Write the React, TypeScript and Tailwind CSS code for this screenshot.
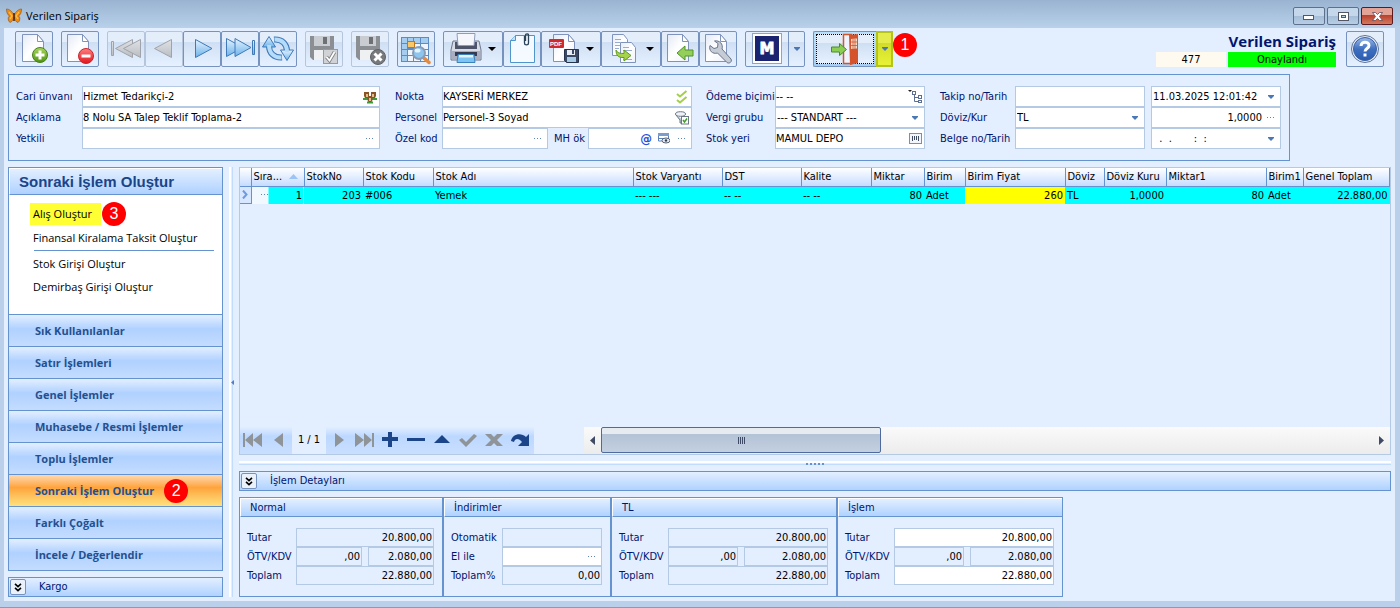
import React, { useId } from 'react';
import { clsx } from 'clsx';

/* ---------- Small shared glyphs ---------- */

const Dots = () => (
    <svg viewBox="0 0 8 2" className="w-2 h-[2px]" fill="#5f84b8" shapeRendering="crispEdges">
        <rect x="0" y="0" width="1" height="1" />
        <rect x="3" y="0" width="1" height="1" />
        <rect x="6" y="0" width="1" height="1" />
    </svg>
);

const CaretSmall = () => (
    <svg viewBox="0 0 6 4" className="w-[6px] h-1" fill="#4a78b5">
        <path d="M0 0h6v1L3 4 0 1z" />
    </svg>
);

const CaretBlack = () => (
    <svg viewBox="0 0 8 4" className="w-2 h-1" fill="#000">
        <path d="M0 0h8L4 4z" />
    </svg>
);

const Expand = () => (
    <svg viewBox="0 0 8 9" className="w-2 h-[9px]" fill="none" stroke="#000" strokeWidth="1.6">
        <path d="M1 .8l3 2.8 3-2.8M1 4.8l3 2.8 3-2.8" />
    </svg>
);

/* ---------- Toolbar icons, 32x32 ---------- */

const Svg = ({ children }: { children: React.ReactNode }) => (
    <svg viewBox="0 0 32 32" className="w-8 h-8 shrink-0">
        {children}
    </svg>
);

const Defs = () => (
    <svg className="absolute w-0 h-0" aria-hidden="true">
        <defs>
            <linearGradient id="gPage" x1="0" y1="0" x2="1" y2="1">
                <stop offset="0" stopColor="#e4eaf5" />
                <stop offset=".5" stopColor="#fff" />
                <stop offset="1" stopColor="#edf1fa" />
            </linearGradient>
            <linearGradient id="gGreen" x1="0" y1="0" x2="0" y2="1">
                <stop offset="0" stopColor="#a9d65c" />
                <stop offset="1" stopColor="#4f9310" />
            </linearGradient>
            <linearGradient id="gRed" x1="0" y1="0" x2="0" y2="1">
                <stop offset="0" stopColor="#ff7f7f" />
                <stop offset="1" stopColor="#e3131b" />
            </linearGradient>
            <linearGradient id="gBlue" x1="0" y1="0" x2="0" y2="1">
                <stop offset="0" stopColor="#e4f3ff" />
                <stop offset="1" stopColor="#6bb2ea" />
            </linearGradient>
            <linearGradient id="gGray" x1="0" y1="0" x2="0" y2="1">
                <stop offset="0" stopColor="#e0e2e5" />
                <stop offset="1" stopColor="#b9bdc2" />
            </linearGradient>
            <linearGradient id="gHelp" x1="0" y1="0" x2="0" y2="1">
                <stop offset="0" stopColor="#9cbbe8" />
                <stop offset=".5" stopColor="#3f6fc0" />
                <stop offset="1" stopColor="#2c5cae" />
            </linearGradient>
        </defs>
    </svg>
);

const Page = ({ x = 4 }: { x?: number }) => (
    <g transform={`translate(${x} 1)`}>
        <path d="M.5 .5h15l6 7v20H.5z" fill="url(#gPage)" stroke="#7f93bd" />
        <path d="M15.5 .5v7h6z" fill="#fff" stroke="#7f93bd" strokeLinejoin="round" />
    </g>
);

const NewIcon = () => (
    <Svg>
        <Page />
        <circle cx="22" cy="22" r="7.5" fill="url(#gGreen)" stroke="#47801a" />
        <path d="M20.5 17.5h3v3h3v3h-3v3h-3v-3h-3v-3h3z" fill="#fff" />
    </Svg>
);

const DeleteIcon = () => (
    <Svg>
        <Page x={3} />
        <circle cx="22" cy="23" r="7.5" fill="url(#gRed)" stroke="#c8252c" />
        <rect x="17.5" y="21.5" width="9" height="3" fill="#fff" />
    </Svg>
);

const FirstIcon = () => (
    <Svg>
        <g fill="url(#gGray)" stroke="#a0a4aa" strokeLinejoin="round">
            <rect x="1.5" y="8.5" width="2" height="14" />
            <path d="M22.5 6.5v18L5.5 15.5z" />
            <path d="M30.5 6.5v18L13.5 15.5z" />
        </g>
    </Svg>
);

const PrevIcon = () => (
    <Svg>
        <path d="M23.5 6.5v18L6.5 15.5z" fill="url(#gGray)" stroke="#a0a4aa" strokeLinejoin="round" />
    </Svg>
);

const NextIcon = () => (
    <Svg>
        <path d="M9.5 6.5v18L26 15.5z" fill="url(#gBlue)" stroke="#3f79b8" strokeLinejoin="round" />
    </Svg>
);

const LastIcon = () => (
    <Svg>
        <g fill="url(#gBlue)" stroke="#3f79b8" strokeLinejoin="round">
            <path d="M2.5 5.5v18L19 14.500z" />
            <path d="M11 5.5v18L27 14.500z" />
            <rect x="28.5" y="7.5" width="2" height="14" />
        </g>
    </Svg>
);

const RefreshIcon = () => (
    <Svg>
        <g fill="none" stroke="#3f79b8" strokeWidth="6">
            <path d="M7 13c0 7 5 12 13 11.500" />
            <path d="M25 18c0-7-5-12-13-11.500" />
        </g>
        <g fill="url(#gBlue)" stroke="#3f79b8" strokeLinejoin="round">
            <path d="M.5 14L7 3.500 13.500 14z" />
            <path d="M18.500 17h13L25 27.500z" />
        </g>
        <g fill="none" stroke="#b5dcf8" strokeWidth="4">
            <path d="M7 12c0 8 5 13 12.500 12.500" />
            <path d="M25 19c0-8-5-13-12.500-12.500" />
        </g>
    </Svg>
);

const FloppyGray = () => (
    <>
        <path d="M2 3h24v24H5l-3-3z" fill="#8b8e92" />
        <rect x="6" y="3" width="16" height="10" fill="#c9ccd0" />
        <rect x="15" y="4" width="4" height="7" fill="#6d7074" />
        <rect x="6" y="17" width="16" height="10" fill="#eef0f2" />
    </>
);

const SaveIcon = () => (
    <Svg>
        <FloppyGray />
        <rect x="15.5" y="16.5" width="14" height="14" fill="#d0d2d5" stroke="#97999c" />
        <path d="M18.500 24l3 3.500 5-8.500" fill="none" stroke="#7f8284" strokeWidth="3.500" />
        <path d="M18.500 24l3 3.500 5-8.500" fill="none" stroke="#fff" strokeWidth="1.800" />
    </Svg>
);

const SaveCloseIcon = () => (
    <Svg>
        <FloppyGray />
        <circle cx="24" cy="24" r="7.5" fill="#77797c" stroke="#606266" />
        <path d="M20.5 20.5l7 7M27.5 20.5l-7 7" stroke="#fff" strokeWidth="3" />
    </Svg>
);

const SearchGridIcon = () => (
    <Svg>
        <rect x="1" y="4" width="28" height="25" fill="#5b8cc4" />
        <path d="M2 5h5v5H2zM8 5h5v5H8zM14 5h6v5h-6zM21 5h7v5h-7zM2 11h5v5H2zM2 17h5v5H2zM2 23h5v5H2z" fill="#a5cdf0" />
        <path d="M14 11h6v5h-6zM21 11h7v5h-7zM8 17h5v5H8zM14 17h6v5h-6zM21 17h7v5h-7zM8 23h5v5H8zM14 23h6v5h-6zM21 23h7v5h-7z" fill="#eef5fd" />
        <rect x="7.5" y="8.5" width="7" height="6" fill="#f8c868" stroke="#c0761a" />
        <path d="M24 25l5 4.500" stroke="#e58b3d" strokeWidth="3.500" strokeLinecap="round" />
        <circle cx="19" cy="20" r="6" fill="#8cc6f0" stroke="#8a9cb4" strokeWidth="2" />
        <ellipse cx="17.500" cy="17.500" rx="3" ry="2" fill="#e4f4ff" />
    </Svg>
);

const PrinterIcon = () => (
    <Svg>
        <path d="M3 8h26l2 9v10H1V17z" fill="#d7dbe6" stroke="#6d7690" />
        <path d="M5 9h22v7H5z" fill="#4d5368" />
        <path d="M7 .5h18l-1 12H8z" fill="#f4f6fb" stroke="#8f9cb8" />
        <path d="M2 18h28v8H2z" fill="#a9afc0" />
        <path d="M5 19h22v4H5z" fill="#353b50" />
        <path d="M8 21.500h16l1 8H7z" fill="#7cc4f3" stroke="#3d81bd" />
        <path d="M9 22h14v2.500H9z" fill="#e2f3fd" />
    </Svg>
);

const ClipIcon = () => (
    <Svg>
        <path d="M4.5 7.5l5-5h19v27h-24z" fill="#f4faff" stroke="#4f95cc" />
        <path d="M4.5 7.5h5v-5" fill="#bfe1f7" stroke="#4f95cc" />
        <path d="M18.500 3v7c0 2.500 4 2.500 4 0V2c0-1.500-3-1.500-3 0v6" fill="none" stroke="#2c4358" strokeWidth="1.300" />
    </Svg>
);

const PdfIcon = () => (
    <Svg>
        <Page x={5} />
        <rect x="1" y="6" width="15" height="9" rx="1" fill="#d02a2a" />
        <text x="2" y="13" fontSize="6" fontWeight="700" fill="#fff" fontFamily="Liberation Sans, sans-serif">PDF</text>
        <path d="M16.5 16.5h14v13h-12l-2-2z" fill="#3a4a66" stroke="#26334b" />
        <rect x="19" y="17" width="8" height="5" fill="#e8edf6" />
        <rect x="24" y="17" width="2" height="4" fill="#3a4a66" />
        <rect x="19" y="24" width="9" height="5" fill="#a8cbe8" />
    </Svg>
);

const CopyIcon = () => (
    <Svg>
        <path d="M4.5 1.5h11l4 5v16h-15z" fill="url(#gPage)" stroke="#7f93bd" />
        <path d="M7 6.500h6M7 9.500h5M7 12.500h5M7 15.500h4" stroke="#98abd0" />
        <path d="M12.5 9.5h11l4 5v15h-15z" fill="url(#gPage)" stroke="#7f93bd" />
        <path d="M15 14.500h6M15 17.500h9M15 26.500h9" stroke="#98abd0" />
        <path d="M8 17c1 3 4 3.500 8 3.500V17l7 5.500-7 5.500v-3.500C10 25 8 22 8 17z" fill="#a5d34c" stroke="#5f9a21" />
    </Svg>
);

const ImportIcon = () => (
    <Svg>
        <Page x={3} />
        <path d="M13 20l8-7v4h8v6h-8v4z" fill="#94cf5c" stroke="#4e9527" strokeLinejoin="round" />
    </Svg>
);

const WrenchIcon = () => (
    <Svg>
        <Page x={3} />
        <path d="M8 12.5l4 3 3.500-1 .5-4-3.500-2.500c5-1 9 3 7.500 8l9 10c1.500 3-2 5-4 3.500l-9.500-9.500c-5 1.500-9-2.500-7.500-7.500z" fill="#c6ccd6" stroke="#68748a" strokeLinejoin="round" />
    </Svg>
);

const LogoIcon = () => (
    <Svg>
        <rect x="1.5" y=".5" width="29" height="30" fill="#fff" stroke="#8ea3c6" />
        <rect x="4" y="3" width="24" height="25" fill="#1a2370" />
        <text x="16" y="21" textAnchor="middle" fontSize="15" fontWeight="700" fill="#fff" stroke="#fff" strokeWidth=".8" fontFamily="DejaVu Sans, sans-serif">M</text>
    </Svg>
);

const DoorIcon = () => (
    <svg viewBox="0 0 32 32" className="w-8 h-8">
        <path d="M14.5 1.5h8v29h-8z" fill="#eef4ff" stroke="#d2552b" strokeWidth="1.500" />
        <path d="M20 2l9-1v29l-8 2z" fill="#d4532c" />
        <path d="M22 6l6-.5v10l-6 .5z" fill="#f0dccb" />
        <path d="M24 6v10M26 6v10M22 9h6M22 12.500h6" stroke="#d4532c" strokeWidth=".8" />
        <path d="M2.500 14h8v-3.500l7 6-7 6V19h-8z" fill="#8ccd54" stroke="#4a8c2a" strokeLinejoin="round" />
    </svg>
);

const HelpIcon = () => (
    <Svg>
        <circle cx="16" cy="16" r="13.500" fill="#e8eef8" stroke="#5e7397" />
        <circle cx="16" cy="16" r="11.500" fill="url(#gHelp)" stroke="#3a60a6" />
        <path d="M12 13c0-5 8-5 8-.5 0 3-4 3-4 6" fill="none" stroke="#fff" strokeWidth="3" />
        <rect x="14.5" y="20.5" width="3" height="3" fill="#fff" />
    </Svg>
);

const Butterfly = () => (
    <svg viewBox="0 0 16 16" className="w-4 h-4">
        <path d="M8 7C6 3 3 1 .5 1c0 3 1 6 3 7-2 1-1.500 5 .5 6.500 2-.5 3.500-3 4-5.500.5 2.500 2 5 4 5.500 2-1.500 2.500-5.500.5-6.500 2-1 3-4 3-7C13 1 10 3 8 7z" fill="#f08c14" stroke="#8a4c10" strokeWidth=".6" />
        <path d="M3 4l3 4-2 3M13 4l-3 4 2 3" fill="none" stroke="#ffc04a" strokeWidth="1.200" />
        <path d="M8 5v8" stroke="#3f240c" strokeWidth="1.500" />
    </svg>
);

/* ---------- Field icons ---------- */

const PeopleIcon = () => (
    <svg viewBox="0 0 14 14" className="w-[14px] h-[14px]">
        <path d="M0 8h6v2H0zM8 8h6v2H8zM4 11.500h6v2H4z" fill="#3f9a3a" />
        <path d="M1 2h5v4l-1 2H2L1 6zM8 2h5v4l-1 2H9L8 6zM4.500 6h5v4l-1 2h-3l-1-2z" fill="#8a5526" />
        <path d="M3 4h2v3H3zM9 4h2v3H9zM6 8h2v3H6z" fill="#e6bd8d" />
    </svg>
);

const ChecksIcon = () => (
    <svg viewBox="0 0 12 14" className="w-3 h-[14px]" fill="none" stroke="#a4cf4b" strokeWidth="2">
        <path d="M1 4l3 2.500L10.500 1M1 10l3 2.500L10.500 7" />
    </svg>
);

const FunnelIcon = () => (
    <svg viewBox="0 0 14 14" className="w-[14px] h-[14px]">
        <ellipse cx="5.500" cy="3" rx="5" ry="2.300" fill="#eef1f6" stroke="#6c7789" />
        <path d="M1 4l4 5v3h2V8" fill="#c3cad6" stroke="#6c7789" />
        <rect x="6.5" y="5.5" width="7" height="7.500" fill="#fff" stroke="#6c7789" />
        <path d="M8 9l1.500 2L12 7.500" fill="none" stroke="#3e9d2c" strokeWidth="1.500" />
    </svg>
);

const TreeIcon = () => (
    <svg viewBox="0 0 14 14" className="w-[14px] h-[14px]" fill="none" stroke="#5c6f92">
        <path d="M0 0h4L2 2z" fill="#222" stroke="none" />
        <rect x="4.5" y="1.5" width="3" height="3" />
        <rect x="10.5" y="5.5" width="3" height="3" />
        <rect x="10.5" y="10.5" width="3" height="2" />
        <path d="M6.500 5v6.500h4M6.500 7.500h4" />
    </svg>
);

const DepotIcon = () => (
    <svg viewBox="0 0 13 11" className="w-[13px] h-[11px]" fill="none" stroke="#7d8ea8">
        <rect x=".5" y=".5" width="12" height="10" fill="#f3f6fb" />
        <path d="M3.500 3v5M5.500 3v4M7.500 3v4M9.500 3v5" stroke="#3d4a60" />
    </svg>
);

const FormEyeIcon = () => (
    <svg viewBox="0 0 12 11" className="w-3 h-[11px]">
        <path d="M.5 .5h10v5h-10z" fill="#fff" stroke="#5b80b8" />
        <path d="M0 0h11v3H0z" fill="#7d9ccc" />
        <path d="M.5 5v3H4" fill="none" stroke="#5b80b8" />
        <ellipse cx="8" cy="7.500" rx="4" ry="2.500" fill="#e4e9f2" stroke="#5a6577" />
        <circle cx="8" cy="7.500" r="1.200" fill="#333c4b" />
    </svg>
);

/* ---------- Building blocks ---------- */

const Badge = ({ n, className }: { n: number; className?: string }) => (
    <span className={clsx("flex items-center justify-center w-6 h-6 shrink-0 rounded-full bg-[#fe0000] text-white text-[16px] leading-none font-normal font-['Liberation_Sans',sans-serif]", className)}>
        {n}
    </span>
);

type ToolProps = {
    label: string;
    icon: React.ReactNode;
    caret?: boolean;
    disabled?: boolean;
};

const Tool = ({ label, icon, caret, disabled }: ToolProps) => (
    <button
        type="button"
        aria-label={label}
        disabled={disabled}
        className={clsx(
            'flex items-center h-9 rounded-[2px] border bg-linear-to-b from-[#e4eefb] from-30% via-[#cfdff3] via-30% to-[#e6f1ff]',
            caret ? 'w-[60px] pl-[6px] gap-[6px]' : 'w-[38px] justify-center',
            disabled ? 'border-[#b5c5dc]' : 'border-[#7693bf]'
        )}
    >
        {icon}
        {caret && <CaretBlack />}
    </button>
);

type FieldProps = {
    label: string;
    value?: string;
    options?: boolean;
    hideLabel?: boolean;
    right?: boolean;
    labelClass?: string;
    boxClass: string;
    extras?: React.ReactNode;
};

const Field = ({ label, value = '', options, hideLabel, right, labelClass, boxClass, extras }: FieldProps) => {
    const id = useId();
    return (
        <div className="flex items-center">
            {!hideLabel && (
                <label htmlFor={id} className={clsx('text-[#00156e] whitespace-nowrap', labelClass)}>
                    {label}
                </label>
            )}
            <div className={clsx('flex items-center h-[21px] bg-white border border-[#b4c9e3]', boxClass)}>
                {options ? (
                    <select id={id} defaultValue={value} className="flex-1 min-w-0 h-full appearance-none bg-transparent outline-none pl-px">
                        <option>{value}</option>
                    </select>
                ) : (
                    <input
                        id={id}
                        type="text"
                        aria-label={hideLabel ? label : undefined}
                        defaultValue={value}
                        className={clsx('flex-1 min-w-0 h-full bg-transparent outline-none whitespace-pre', right && 'text-right')}
                    />
                )}
                {extras}
            </div>
        </div>
    );
};

const Extra = ({ label, children }: { label: string; children: React.ReactNode }) => (
    <button type="button" aria-label={label} className="flex items-center justify-center w-[18px] h-full shrink-0">
        {children}
    </button>
);

type AmountProps = {
    label: string;
    value?: string;
    white?: boolean;
    className: string;
    labelClass?: string;
    hideLabel?: boolean;
    dots?: boolean;
};

const Amount = ({ label, value, white, className, labelClass = 'w-[49px]', hideLabel, dots }: AmountProps) => {
    const id = useId();
    return (
        <div className={clsx('flex items-center min-w-0', className)}>
            {!hideLabel && (
                <label htmlFor={id} className={clsx('shrink-0 whitespace-nowrap text-[#00156e]', labelClass)}>
                    {label}
                </label>
            )}
            <div className={clsx('flex items-center flex-1 min-w-0 h-[19px] border border-[#b4c9e3]', white ? 'bg-white' : 'bg-[#e3eeff]')}>
                <input
                    id={id}
                    type="text"
                    aria-label={hideLabel ? label : undefined}
                    defaultValue={value}
                    className="flex-1 w-full min-w-0 h-full bg-transparent outline-none text-right pr-px"
                />
                {dots && <Extra label={`${label} seç`}><Dots /></Extra>}
            </div>
        </div>
    );
};

const TotalsBox = ({ title, className, children }: { title: string; className: string; children: React.ReactNode }) => (
    <section className={clsx('h-[100px] border border-[#6593cf] bg-[#e3eeff]', className)}>
        <h3 className="h-[19px] leading-[17px] pl-[9px] text-[#00156e] border-t border-l border-white border-b border-b-[#6593cf] bg-linear-to-b from-[#e3efff] to-[#afd2ff]">
            {title}
        </h3>
        <div className="pt-[11px] pr-2 pl-[7px]">{children}</div>
    </section>
);

const Totals = ({ title, className, taxClass, white }: { title: string; className: string; taxClass: string; white?: boolean }) => (
    <TotalsBox title={title} className={className}>
        <Amount label="Tutar" value="20.800,00" white={white} className="w-full" />
        <div className="flex gap-[6px]">
            <Amount label="ÖTV/KDV" value=",00" className={clsx('shrink-0', taxClass)} />
            <Amount label="KDV" hideLabel value="2.080,00" className="flex-1" />
        </div>
        <Amount label="Toplam" value="22.880,00" white={white} className="w-full" />
    </TotalsBox>
);

/* ---------- Data ---------- */

const sections = [
    'Sık Kullanılanlar',
    'Satır İşlemleri',
    'Genel İşlemler',
    'Muhasebe / Resmi İşlemler',
    'Toplu İşlemler',
    'Sonraki İşlem Oluştur',
    'Farklı Çoğalt',
    'İncele / Değerlendir',
];

const columns = [
    { title: 'Sıra...', value: '1', w: 'w-[53px]', right: true, sorted: true },
    { title: 'StokNo', value: '203', w: 'w-[59px]', right: true },
    { title: 'Stok Kodu', value: '#006', w: 'w-[70px]' },
    { title: 'Stok Adı', value: 'Yemek', w: 'w-[200px]' },
    { title: 'Stok Varyantı', value: '--- ---', w: 'w-[89px]' },
    { title: 'DST', value: '-- --', w: 'w-[79px]' },
    { title: 'Kalite', value: '-- --', w: 'w-[70px]' },
    { title: 'Miktar', value: '80', w: 'w-[53px]', right: true },
    { title: 'Birim', value: 'Adet', w: 'w-[41px]' },
    { title: 'Birim Fiyat', value: '260', w: 'w-[100px]', right: true, marked: true },
    { title: 'Döviz', value: 'TL', w: 'w-[39px]' },
    { title: 'Döviz Kuru', value: '1,0000', w: 'w-[62px]', right: true },
    { title: 'Miktar1', value: '80', w: 'w-[100px]', right: true },
    { title: 'Birim1', value: 'Adet', w: 'w-[37px]' },
    { title: 'Genel Toplam', value: '22.880,00', w: '', right: true },
];

const gray = '#8f9499';
const navy = '#1b4489';

const navLeft = [
    { label: 'İlk kayıt', fill: gray, d: 'M0 1h2v14H0zM10 1v14L2 8zM19 1v14l-9-7z' },
    { label: 'Önceki kayıt', fill: gray, d: 'M14 1v14L5 8z' },
];

const navRight = [
    { label: 'Sonraki kayıt', fill: gray, d: 'M6 1v14l9-7z' },
    { label: 'Son kayıt', fill: gray, d: 'M0 1v14l9-7zM9 1v14l8-7zM17 1h2v14h-2z' },
    { label: 'Ekle', fill: navy, d: 'M7 0h4v5h6v4h-6v6H7V9H1V5h6z' },
    { label: 'Sil', fill: navy, d: 'M0 6h18v3H0z' },
    { label: 'Düzenle', fill: navy, d: 'M9 3l8 8H1z' },
    { label: 'Onayla', fill: gray, d: 'M0 8l3-2 4 4 8-8 3 2L7 15z' },
    { label: 'İptal', fill: gray, d: 'M0 2h6l3 3 3-3h6l-6 6 6 6h-6l-3-3-3 3H0l6-6z' },
    { label: 'Yenile', fill: navy, d: 'M0 9C1 2 10 0 15 5l3-3v12H7l4-4C8 6 4 6 3 10z' },
];

const NavButton = ({ item }: { item: { label: string; fill: string; d: string } }) => (
    <button type="button" aria-label={item.label} className="flex items-center justify-center w-[26px] h-full pb-[2px]">
        <svg viewBox="0 0 20 16" className="w-5 h-4" fill={item.fill}>
            <path d={item.d} />
        </svg>
    </button>
);

const strip = 'flex h-[27px] bg-linear-to-b from-[#e3eeff] from-0% via-[#bcd8ff] via-35% to-[#c9dfff]';

/* ---------- Sections of the window ---------- */

const TitleBar = () => (
    <header className="flex items-center h-7 pt-1 pl-[6px] pr-[7px] gap-1 bg-linear-to-b from-[#99b3d1] to-[#b9d1ea]">
        <Butterfly />
        <h1 className="flex-1 text-[11px] leading-4 text-black font-['Open_Sans',sans-serif]">Verilen Sipariş</h1>
        <div className="flex gap-[2px]">
            <button type="button" aria-label="Simge durumuna küçült" className="flex items-center justify-center w-8 h-[18px] rounded-[2px] border border-[#5d718c] bg-linear-to-b from-[#c5d7ea] from-50% via-[#a5bdd7] via-50% to-[#b8cee6]">
                <svg viewBox="0 0 12 6" className="w-3 h-[6px] mt-1"><rect x=".5" y=".5" width="10" height="4" fill="#fff" stroke="#535666" /></svg>
            </button>
            <button type="button" aria-label="Ekranı kapla" className="flex items-center justify-center w-8 h-[18px] rounded-[2px] border border-[#5d718c] bg-linear-to-b from-[#c5d7ea] from-50% via-[#a5bdd7] via-50% to-[#b8cee6]">
                <svg viewBox="0 0 11 9" className="w-[11px] h-[9px]"><rect x=".5" y=".5" width="10" height="8" fill="#fff" stroke="#535666" /><rect x="3.5" y="3.5" width="4" height="2" fill="#b9cde4" stroke="#535666" /></svg>
            </button>
            <button type="button" aria-label="Kapat" className="flex items-center justify-center w-8 h-[18px] rounded-[2px] border border-[#5b1a20] bg-linear-to-b from-[#e3a397] from-45% via-[#b93f2b] via-45% to-[#d3785e]">
                <svg viewBox="0 0 11 9" className="w-[11px] h-[9px]"><path d="M.5 .5h3l2 2 2-2h3L7.500 4.500l3 4h-3l-2-2-2 2h-3l3-4z" fill="#fff" stroke="#5a4a55" strokeWidth=".8" /></svg>
            </button>
        </div>
    </header>
);

const Toolbar = () => (
    <div className="flex items-start pt-[3px] pl-[11px] pr-[11px] h-[46px]">
        <div className="flex gap-2">
            <Tool label="Yeni" icon={<NewIcon />} />
            <Tool label="Sil" icon={<DeleteIcon />} />
            <div className="flex">
                <Tool label="İlk" icon={<FirstIcon />} disabled />
                <Tool label="Önceki" icon={<PrevIcon />} disabled />
                <Tool label="Sonraki" icon={<NextIcon />} />
                <Tool label="Son" icon={<LastIcon />} />
                <Tool label="Yenile" icon={<RefreshIcon />} />
            </div>
            <Tool label="Kaydet" icon={<SaveIcon />} disabled />
            <Tool label="Kaydet ve kapat" icon={<SaveCloseIcon />} disabled />
            <Tool label="Ara" icon={<SearchGridIcon />} />
            <div className="flex">
                <Tool label="Yazdır" icon={<PrinterIcon />} caret />
                <Tool label="Ekler" icon={<ClipIcon />} />
                <Tool label="PDF kaydet" icon={<PdfIcon />} caret />
                <Tool label="Kopyala" icon={<CopyIcon />} caret />
                <Tool label="İçe aktar" icon={<ImportIcon />} />
                <Tool label="Ayarlar" icon={<WrenchIcon />} />
            </div>
            <div className="flex h-9 rounded-[2px] border border-[#7693bf] bg-linear-to-b from-[#e4eefb] from-30% via-[#cfdff3] via-30% to-[#e6f1ff]">
                <button type="button" aria-label="Mikro" className="flex items-center justify-center w-[42px]"><LogoIcon /></button>
                <button type="button" aria-label="Mikro menüsü" className="flex items-center justify-center w-4 border-l border-[#7693bf]"><CaretSmall /></button>
            </div>
            <div className="flex h-9">
                <button type="button" aria-label="Çıkış" className="w-[63px] p-[2px] rounded-l-[2px] border border-r-0 border-[#7693bf] bg-linear-to-b from-[#b9e0fb] to-[#a6cdf3]">
                    <span className="flex items-center justify-center h-full border border-dotted border-black bg-linear-to-b from-[#e4eefb] from-30% via-[#cfdff3] via-30% to-[#e6f1ff]"><DoorIcon /></span>
                </button>
                <button type="button" aria-label="Çıkış menüsü" className="flex items-center justify-center w-[17px] border-2 border-[#b5c41c] bg-linear-to-b from-[#e3ec4a] from-30% via-[#d0dc2a] via-30% to-[#e8f235]"><CaretSmall /></button>
            </div>
        </div>
        <Badge n={1} className="mt-[2px]" />
        <div className="flex ml-auto gap-[10px]">
            <div className="text-center">
                <h2 className="h-[21px] text-right text-[15px] leading-[21px] font-bold text-[#00156e] font-['Open_Sans',sans-serif]">Verilen Sipariş</h2>
                <div className="flex gap-[2px] leading-[15px] text-[11px]">
                    <span className="w-[70px] bg-[#fffaf0]">477</span>
                    <span className="w-[108px] bg-[#00ff00]">Onaylandı</span>
                </div>
            </div>
            <Tool label="Yardım" icon={<HelpIcon />} />
        </div>
    </div>
);

const HeaderForm = () => (
    <form className="flex w-fit mx-1 pt-[11px] pb-[11px] pl-[7px] pr-2 border border-[#6593cf]">
        <div className="mr-[15px]">
            <Field label="Cari ünvanı" value="Hizmet Tedarikçi-2" labelClass="w-[66px]" boxClass="w-[298px]" extras={<Extra label="Cari seç"><PeopleIcon /></Extra>} />
            <Field label="Açıklama" value="8 Nolu SA Talep Teklif Toplama-2" labelClass="w-[66px]" boxClass="w-[298px]" />
            <Field label="Yetkili" labelClass="w-[66px]" boxClass="w-[298px]" extras={<Extra label="Yetkili seç"><Dots /></Extra>} />
        </div>
        <div className="mr-[14px]">
            <Field label="Nokta" value="KAYSERİ MERKEZ" labelClass="w-[47px]" boxClass="w-[250px]" extras={<Extra label="Nokta seç"><ChecksIcon /></Extra>} />
            <Field label="Personel" value="Personel-3 Soyad" labelClass="w-[47px]" boxClass="w-[250px]" extras={<Extra label="Personel seç"><FunnelIcon /></Extra>} />
            <div className="flex gap-[6px]">
                <Field label="Özel kod" labelClass="w-[47px]" boxClass="w-[106px]" extras={<Extra label="Özel kod seç"><Dots /></Extra>} />
                <Field
                    label="MH ök"
                    labelClass="w-[34px]"
                    boxClass="w-[104px]"
                    extras={
                        <>
                            <Extra label="E-posta"><span className="text-[13px] leading-none font-bold text-[#2a4fd8]">@</span></Extra>
                            <Extra label="Göster"><FormEyeIcon /></Extra>
                            <Extra label="MH ök seç"><Dots /></Extra>
                        </>
                    }
                />
            </div>
        </div>
        <div className="mr-[15px]">
            <Field label="Ödeme biçimi" value="-- --" labelClass="w-[69px]" boxClass="w-[150px]" extras={<Extra label="Ödeme biçimi seç"><TreeIcon /></Extra>} />
            <Field label="Vergi grubu" value="--- STANDART ---" options labelClass="w-[69px]" boxClass="w-[150px]" extras={<span className="flex justify-center w-[18px]"><CaretSmall /></span>} />
            <Field label="Stok yeri" value="MAMUL DEPO" labelClass="w-[69px]" boxClass="w-[150px]" extras={<Extra label="Stok yeri seç"><DepotIcon /></Extra>} />
        </div>
        <div className="mr-[6px]">
            <Field label="Takip no/Tarih" labelClass="w-[75px]" boxClass="w-[130px]" />
            <Field label="Döviz/Kur" value="TL" options labelClass="w-[75px]" boxClass="w-[130px]" extras={<span className="flex justify-center w-[18px]"><CaretSmall /></span>} />
            <Field label="Belge no/Tarih" labelClass="w-[75px]" boxClass="w-[130px]" />
        </div>
        <div>
            <Field label="Takip tarihi" hideLabel value="11.03.2025 12:01:42" boxClass="w-[130px] pl-px" extras={<Extra label="Takip tarihi seç"><CaretSmall /></Extra>} />
            <Field label="Kur" hideLabel right value="1,0000" boxClass="w-[130px] pl-px" extras={<Extra label="Kur seç"><Dots /></Extra>} />
            <Field label="Belge tarihi" hideLabel value="  .  .       :  :" boxClass="w-[130px] pl-px" extras={<Extra label="Belge tarihi seç"><CaretSmall /></Extra>} />
        </div>
    </form>
);

const Sidebar = () => (
    <aside className="flex flex-col w-[215px] shrink-0 gap-[6px]">
        <nav className="flex flex-col flex-1 border border-[#6593cf] bg-white">
            <h2 className="h-[27px] leading-[25px] pl-[9px] border-t border-l border-white border-b border-b-[#6593cf] text-[15px] font-bold text-[#1b4489] bg-linear-to-b from-[#e3efff] to-[#afd2ff] font-['Liberation_Sans',sans-serif]">
                Sonraki İşlem Oluştur
            </h2>
            <div className="flex-1 pl-[21px] pt-[7px] text-[11px] leading-[22px] text-black font-['Open_Sans',sans-serif]">
                <div className="flex items-center gap-px h-6">
                    <a href="#alis" className="w-[71px] pl-[3px] bg-[#ffff33] whitespace-nowrap">Alış Oluştur</a>
                    <Badge n={3} />
                </div>
                <div className="h-[25px] ml-1 mr-2 border-b border-[#6593cf]">
                    <a href="#kiralama" className="block -ml-px leading-[24px] whitespace-nowrap">Finansal Kiralama Taksit Oluştur</a>
                </div>
                <a href="#giris" className="block pl-[3px] mt-[2px] h-[23px]">Stok Girişi Oluştur</a>
                <a href="#demirbas" className="block pl-[3px] h-[23px]">Demirbaş Girişi Oluştur</a>
            </div>
            {sections.map((name) => {
                const active = name === 'Sonraki İşlem Oluştur';
                return (
                    <button
                        key={name}
                        type="button"
                        className={clsx(
                            "flex items-center gap-[10px] h-8 pl-[26px] border-t border-[#6593cf] text-[11px] font-bold text-[#24508f] whitespace-nowrap bg-linear-to-b font-['Open_Sans',sans-serif]",
                            active
                                ? 'from-[#ffd9ab] from-0% via-[#ffa43a] via-40% to-[#ffe17d]'
                                : 'from-[#e3efff] from-0% via-[#b0d1ff] via-45% to-[#c4dcff]'
                        )}
                    >
                        {name}
                        {active && <Badge n={2} />}
                    </button>
                );
            })}
        </nav>
        <button type="button" className="flex items-center h-5 pl-px gap-[13px] border border-[#6593cf] text-[#00156e] bg-linear-to-b from-[#e3efff] to-[#afd2ff]">
            <span className="flex items-center justify-center w-4 h-4 rounded-[2px] border border-[#7693bf] bg-[#eaf1fb]"><Expand /></span>
            Kargo
        </button>
    </aside>
);

const OrderTable = () => (
    <table className="w-full table-fixed border-collapse">
        <thead>
            <tr className="h-[18px] bg-linear-to-b from-white to-[#c5dcff] text-left">
                <th className="w-[11px] p-0 border-r border-b border-[#6593cf]" aria-label="Seçili satır"></th>
                {columns.map((col) => (
                    <th key={col.title} className={clsx('p-0 pl-[2px] border-r border-b border-[#6593cf] font-normal whitespace-nowrap', col.w)}>
                        {col.sorted ? (
                            <span className="flex items-center justify-between pr-[6px]">
                                {col.title}
                                <svg viewBox="0 0 9 5" className="w-[9px] h-[5px]" fill="#9cc3f5"><path d="M4.500 0L9 5H0z" /></svg>
                            </span>
                        ) : col.title}
                    </th>
                ))}
            </tr>
        </thead>
        <tbody>
            <tr className="h-[17px] leading-[17px] bg-[#00ffff]">
                <td className="p-0 border-r border-b border-[#6593cf] bg-[#d7e7ff]">
                    <svg viewBox="0 0 6 9" className="w-[6px] h-[9px] mx-auto" fill="none" stroke="#6c9be0" strokeWidth="2"><path d="M1 .5l3.500 4L1 8.500" /></svg>
                </td>
                {columns.map((col) => (
                    <td key={col.title} className={clsx('p-0 px-[2px] whitespace-nowrap', col.right && 'text-right', col.marked && 'bg-[#ffff00]', col.sorted && 'bg-linear-to-r from-[#f2f8ff] from-[17px] to-[#00ffff] to-[17px]')}>
                        {col.sorted ? (
                            <span className="flex items-center justify-between pl-[7px]"><Dots />{col.value}</span>
                        ) : col.value}
                    </td>
                ))}
            </tr>
        </tbody>
    </table>
);

const GridFooter = () => (
    <div className="flex h-[27px] mt-auto">
        <div className={strip}>{navLeft.map((item) => <NavButton key={item.label} item={item} />)}</div>
        <span className="w-[34px] leading-[26px] text-center">1 / 1</span>
        <div className={strip}>{navRight.map((item) => <NavButton key={item.label} item={item} />)}</div>
        <div className="flex flex-1 ml-[50px] bg-linear-to-b from-[#fafafa] to-[#ececec]">
            <button type="button" aria-label="Sola kaydır" className="flex items-center justify-center w-[17px]">
                <svg viewBox="0 0 5 9" className="w-[5px] h-[9px]" fill="#3e4a66"><path d="M5 0v9L0 4.500z" /></svg>
            </button>
            <div className="flex-1">
                <div className="flex items-center justify-center gap-px w-[280px] h-[26px] rounded-[2px] border border-[#4f6a9c] bg-linear-to-b from-[#e6ebf2] from-25% via-[#b3c2d5] via-25% to-[#c3d0e1]">
                    <span className="w-px h-[7px] bg-[#3e4a66]"></span>
                    <span className="w-px h-[7px] bg-[#3e4a66]"></span>
                    <span className="w-px h-[7px] bg-[#3e4a66]"></span>
                    <span className="w-px h-[7px] bg-[#3e4a66]"></span>
                </div>
            </div>
            <button type="button" aria-label="Sağa kaydır" className="flex items-center justify-center w-[17px]">
                <svg viewBox="0 0 5 9" className="w-[5px] h-[9px]" fill="#3e4a66"><path d="M0 0v9l5-4.500z" /></svg>
            </button>
        </div>
    </div>
);

const App: React.FC = () => {
    return (
        <div className="flex flex-col min-h-screen border-b border-[#2fc0e6] bg-[#bad0ea] text-[11px] leading-4 text-black font-['DejaVu_Sans_Condensed','Noto_Sans',sans-serif]">
            <Defs />
            <TitleBar />
            <div className="flex flex-col flex-1 ml-1 mr-[5px] mb-[6px] pb-1 bg-[#e3eeff]">
                <Toolbar />
                <HeaderForm />
                <main className="flex flex-1 mt-[6px] ml-1 mr-1">
                    <Sidebar />
                    {/* Vertical splitter */}
                    <div className="flex items-center w-[4px] mx-[6px] border-l-2 border-l-white border-r border-r-[#c2dcff]">
                        <svg viewBox="0 0 3 5" className="w-[3px] h-[5px] shrink-0" fill="#4f7fc0"><path d="M3 0v5L0 2.500z" /></svg>
                    </div>
                    <div className="flex flex-col flex-1 min-w-0">
                        <section className="flex flex-col flex-1 border border-[#b4c9e3]">
                            <OrderTable />
                            <GridFooter />
                        </section>
                        {/* Horizontal splitter */}
                        <div className="flex justify-center gap-[2px] h-[4px] my-[6px] border-t-2 border-t-white border-b border-b-[#c2dcff]">
                            {[0, 1, 2, 3, 4].map((i) => <span key={i} className="w-[2px] h-[2px] bg-[#6593cf]"></span>)}
                        </div>
                        <button type="button" className="flex items-center h-5 pl-px gap-[13px] border border-[#6593cf] text-[#00156e] bg-linear-to-b from-[#e3efff] to-[#afd2ff]">
                            <span className="flex items-center justify-center w-4 h-4 rounded-[2px] border border-[#7693bf] bg-[#eaf1fb]"><Expand /></span>
                            İşlem Detayları
                        </button>
                        <div className="flex mt-[6px]">
                            <Totals title="Normal" className="w-[204px]" taxClass="w-[115px]" />
                            <TotalsBox title="İndirimler" className="w-[168px]">
                                <Amount label="Otomatik" labelClass="w-[51px]" className="w-full" />
                                <Amount label="El ile" white dots labelClass="w-[51px]" className="w-full" />
                                <Amount label="Toplam%" value="0,00" labelClass="w-[51px]" className="w-full" />
                            </TotalsBox>
                            <Totals title="TL" className="w-[226px]" taxClass="w-[119px]" />
                            <Totals title="İşlem" className="w-[226px]" taxClass="w-[119px]" white />
                        </div>
                    </div>
                </main>
            </div>
        </div>
    );
};

export default App;
